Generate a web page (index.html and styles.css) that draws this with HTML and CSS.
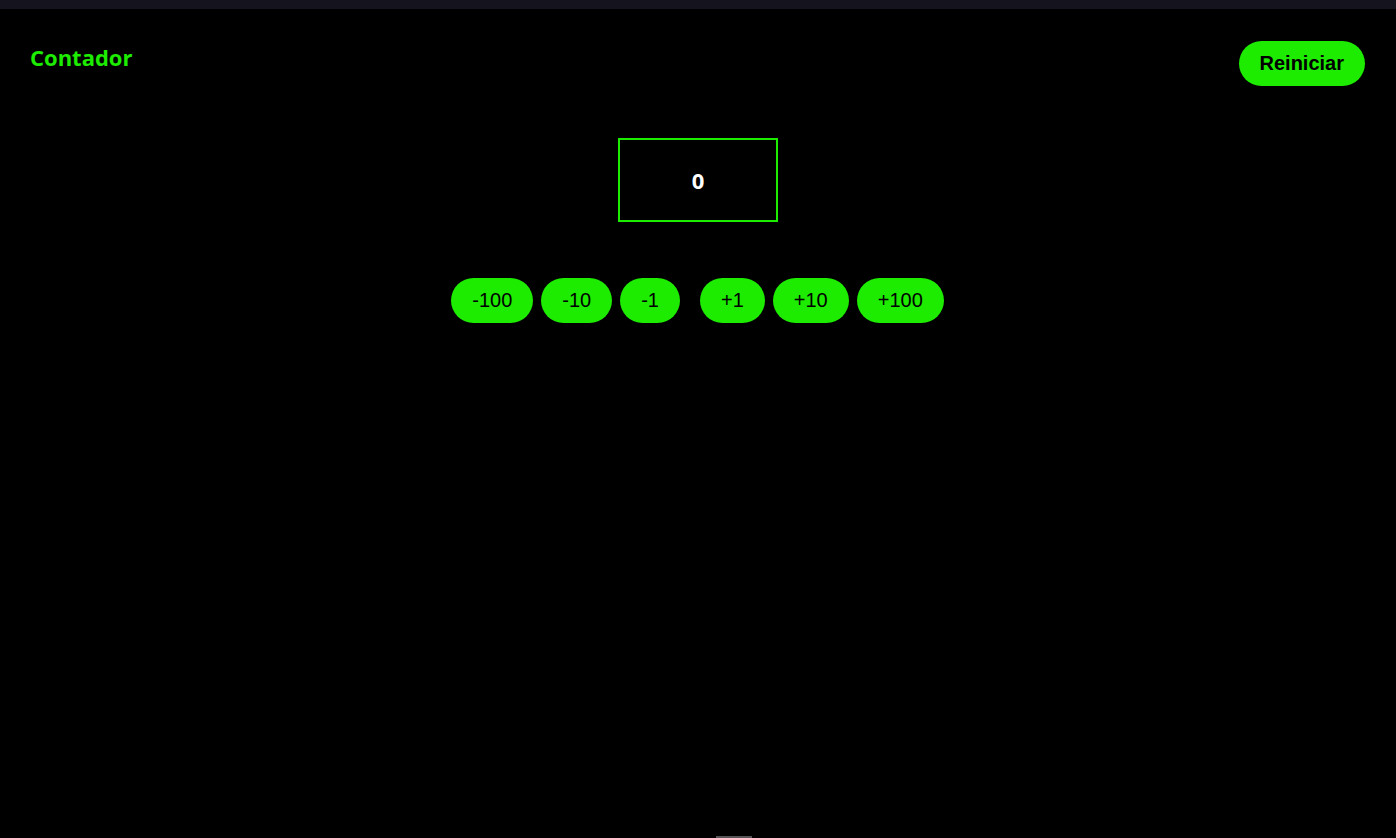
FILE: index.html
```html
<!DOCTYPE html>
<html lang="es">
<head>
<meta charset="utf-8">
<title>Contador</title>
<link rel="stylesheet" href="styles.css">
</head>
<body>
<div class="topbar"></div>
<header class="header">
  <h1 class="title">Contador</h1>
  <button class="btn btn-reset">Reiniciar</button>
</header>
<main class="main">
  <div class="display">0</div>
  <div class="controls">
    <div class="group">
      <button class="btn">-100</button>
      <button class="btn">-10</button>
      <button class="btn">-1</button>
    </div>
    <div class="group">
      <button class="btn">+1</button>
      <button class="btn">+10</button>
      <button class="btn">+100</button>
    </div>
  </div>
</main>
<div class="handle"></div>
</body>
</html>
```
FILE: styles.css
```css
html, body {
  margin: 0;
  padding: 0;
  background: #000;
  height: 100%;
}
body {
  font-family: "Liberation Sans", Arial, sans-serif;
  overflow: hidden;
  position: relative;
}
.topbar {
  height: 9px;
  background: #15141e;
}
.header {
  display: flex;
  justify-content: space-between;
  align-items: flex-start;
  padding: 32px 31px 0 30px;
}
.title {
  margin: 0;
  font-family: "Open Sans", sans-serif;
  font-weight: 700;
  font-size: 22px;
  line-height: 32px;
  color: #1deb00;
}
.btn {
  height: 45px;
  padding: 0 21px;
  border: none;
  border-radius: 23px;
  background: #1deb00;
  color: #000;
  font-family: "Liberation Sans", Arial, sans-serif;
  font-size: 20px;
  line-height: 45px;
  cursor: pointer;
}
.btn-reset {
  font-weight: 700;
}
.main {
  display: flex;
  flex-direction: column;
  align-items: center;
  padding-top: 52px;
}
.display {
  box-sizing: border-box;
  width: 160px;
  height: 84px;
  border: 2px solid #1deb00;
  display: flex;
  align-items: center;
  justify-content: center;
  color: #fff;
  font-family: "Open Sans", sans-serif;
  font-weight: 700;
  font-size: 22px;
}
.controls {
  display: flex;
  gap: 20px;
  margin-top: 56px;
  margin-left: -1px;
}
.group {
  display: flex;
  gap: 8px;
}
.handle {
  position: absolute;
  left: 716px;
  bottom: 0;
  width: 36px;
  height: 2px;
  background: #555;
}
```
